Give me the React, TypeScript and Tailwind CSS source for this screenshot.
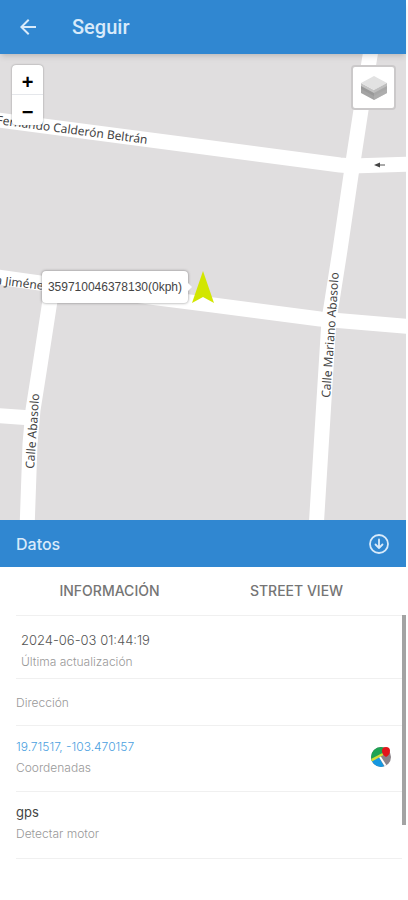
import React from 'react';
import { MdArrowBack } from 'react-icons/md';

interface DataRow {
  value?: string;
  label: string;
  href?: string;
  inset?: boolean;
  dark?: boolean;
}

const rows: DataRow[] = [
  { value: '2024-06-03 01:44:19', label: 'Última actualización', inset: true },
  { label: 'Dirección' },
  { value: '19.71517, -103.470157', label: 'Coordenadas', href: '#coordenadas' },
  { value: 'gps', label: 'Detectar motor', dark: true },
];

const rowHeight = (row: DataRow) => {
  if (!row.value) return 'h-[47px]';
  return row.inset ? 'h-[63px] pt-2' : 'h-[66px] pb-1';
};

const StreetMap: React.FC = () => (
  <svg
    viewBox="0 0 406 466"
    preserveAspectRatio="xMidYMid slice"
    className="absolute inset-0 h-full w-full"
    aria-hidden="true"
  >
    <rect width="406" height="466" fill="#e0dedf" />
    <g fill="none" stroke="#ffffff" strokeWidth="15" strokeLinejoin="round">
      <path d="M-10 65 L204 93 L340 111 L352 112 L416 110" />
      <path d="M372 -10 L361 56 L351 121 L340 196 L329 266 L324 346 L316 476" />
      <path d="M-10 222 L40 229 L213 251 L320 265 L416 273" />
      <path d="M51 240 L39 318 L33 356 L30 390 L27 476" />
      <path d="M-10 361 L32 364" />
    </g>
    <g fill="#444444" fontFamily="'Noto Sans', sans-serif" fontSize="12">
      <text transform="translate(-4 70) rotate(7.5)">Fernando Calderón Beltrán</text>
      <text transform="translate(-5 230) rotate(7)">a Jiménez</text>
      <text transform="translate(34 415) rotate(-86)">Calle Abasolo</text>
      <text transform="translate(330 344) rotate(-86)">Calle Mariano Abasolo</text>
    </g>
    <path d="M385 111 L378 111" stroke="#555555" strokeWidth="1" />
    <path d="M374 111 L380 108.5 L380 113.5 Z" fill="#444444" />
  </svg>
);

const LayersIcon: React.FC = () => (
  <svg viewBox="0 0 26 26" className="h-[26px] w-[26px]" aria-hidden="true">
    <path d="M0 13 L13 20 L26 13 V18 L13 25 L0 18 Z" fill="#a3a3a3" />
    <path d="M0 10 L13 17 L26 10 V14 L13 21 L0 14 Z" fill="#999999" />
    <path d="M0 8 L13 15 L26 8 V11 L13 18 L0 11 Z" fill="#c4c4c4" />
    <path d="M13 1 L26 8 L13 15 L0 8 Z" fill="#e2e2e2" />
    <path d="M13 15 L26 8 V18 L13 25 Z" fill="#b8b8b8" opacity="0.5" />
  </svg>
);

const MapsIcon: React.FC = () => (
  <svg viewBox="0 0 22 22" className="h-[22px] w-[22px]" aria-hidden="true">
    <defs>
      <clipPath id="globe">
        <circle cx="11" cy="11" r="10" />
      </clipPath>
    </defs>
    <g clipPath="url(#globe)">
      <rect width="22" height="22" fill="#8a8288" />
      <path d="M0 0 H16 L12 9 L0 16 Z" fill="#1da352" />
      <path d="M1 16 L9 11 L15 22 H1 Z" fill="#1597e0" />
      <path d="M0 15 L13 8" stroke="#d3dc35" strokeWidth="2.5" />
      <path d="M10 11 L17 22" stroke="#ffffff" strokeWidth="2" />
    </g>
    <path d="M16 11 C14 10 12 8 12 5 A4 4 0 0 1 20 5 C20 8 18 10 16 11 Z" fill="#e3141b" />
  </svg>
);

const App: React.FC = () => {
  return (
    <div className="flex min-h-screen flex-col bg-white pr-0.5 font-['Inter',sans-serif]">
      <header className="z-10 flex h-[54px] items-center gap-8 bg-[#3087d1] px-4 text-[#d8eafa] shadow-md">
        <button type="button" aria-label="Volver" className="flex w-6 justify-center">
          <MdArrowBack size={24} />
        </button>
        <h1 className="font-['Roboto',sans-serif] text-xl font-medium">Seguir</h1>
      </header>

      <main className="relative min-h-80 flex-1 overflow-hidden">
        <StreetMap />

        <div className="absolute top-[11px] left-3 flex w-[31px] flex-col divide-y divide-gray-200 rounded-sm bg-white font-['Liberation_Sans',sans-serif] text-xl leading-none font-bold text-black shadow-[0_0_2px_rgba(0,0,0,0.4)]">
          <button type="button" aria-label="Acercar" className="flex h-[30px] items-center justify-center pt-1">
            +
          </button>
          <button type="button" aria-label="Alejar" className="flex h-[30px] items-center justify-center pt-1">
            −
          </button>
        </div>

        <button
          type="button"
          aria-label="Capas"
          className="absolute top-[11px] right-2.5 flex h-[45px] w-[45px] items-center justify-center rounded border-2 border-[#cbc9ca] bg-white"
        >
          <LayersIcon />
        </button>

        <div className="absolute top-1/2 left-1/2 -translate-x-1/2 -translate-y-1/2">
          <svg viewBox="0 0 22 32" className="h-8 w-[22px]" role="img" aria-label="Vehículo">
            <path d="M11 0 L22 32 L11 26 L0 32 Z" fill="#d2e600" />
          </svg>
          <div className="absolute top-1/2 right-full mr-1 flex h-8 -translate-y-1/2 items-center rounded-sm bg-white px-1.5 font-['Liberation_Sans',sans-serif] text-xs whitespace-nowrap text-[#444] shadow-[0_0_3px_rgba(0,0,0,0.45)]">
            359710046378130(0kph)
            <span className="absolute top-1/2 left-full -translate-y-1/2 border-y-4 border-l-4 border-y-transparent border-l-white" />
          </div>
        </div>
      </main>

      <section>
        <div className="flex h-[47px] items-center justify-between bg-[#3087d1] px-4 text-[#d8eafa]">
          <h2 className="text-base font-medium">Datos</h2>
          <button type="button" aria-label="Ocultar datos">
            <svg
              viewBox="0 0 22 22"
              className="h-[22px] w-[22px]"
              fill="none"
              stroke="currentColor"
              strokeWidth="1.8"
              strokeLinecap="round"
              strokeLinejoin="round"
            >
              <circle cx="11" cy="11" r="9" />
              <path d="M11 6.5 V15 M7.5 11.5 L11 15 L14.5 11.5" />
            </svg>
          </button>
        </div>

        <div className="grid h-12 grid-cols-2 px-4 text-sm font-medium text-[#757575]">
          <button type="button">INFORMACIÓN</button>
          <button type="button">STREET VIEW</button>
        </div>

        <div className="relative pr-1 pb-[41px] pl-4">
          <ul className="divide-y divide-[#f0f0f0] border-y border-[#f0f0f0]">
            {rows.map((row) => (
              <li
                key={row.label}
                className={`flex items-center justify-between pr-2.5 ${rowHeight(row)} ${row.inset ? 'pl-[5px]' : ''}`}
              >
                <div>
                  {row.value && !row.href && (
                    <p className={`text-[13px] leading-[21px] ${row.dark ? 'text-[#444]' : 'font-light text-[#555]'}`}>
                      {row.value}
                    </p>
                  )}
                  {row.href && (
                    <a href={row.href} className="block text-xs leading-[21px] font-light text-[#4b9fe0]">
                      {row.value}
                    </a>
                  )}
                  <p className="text-xs leading-[21px] font-light text-[#999]">{row.label}</p>
                </div>
                {row.href && (
                  <a href={row.href} aria-label="Abrir en mapas">
                    <MapsIcon />
                  </a>
                )}
              </li>
            ))}
          </ul>
          <div className="absolute top-0 right-0 h-[210px] w-1 bg-[#a3a3a3]" />
        </div>
      </section>
    </div>
  );
};

export default App;
